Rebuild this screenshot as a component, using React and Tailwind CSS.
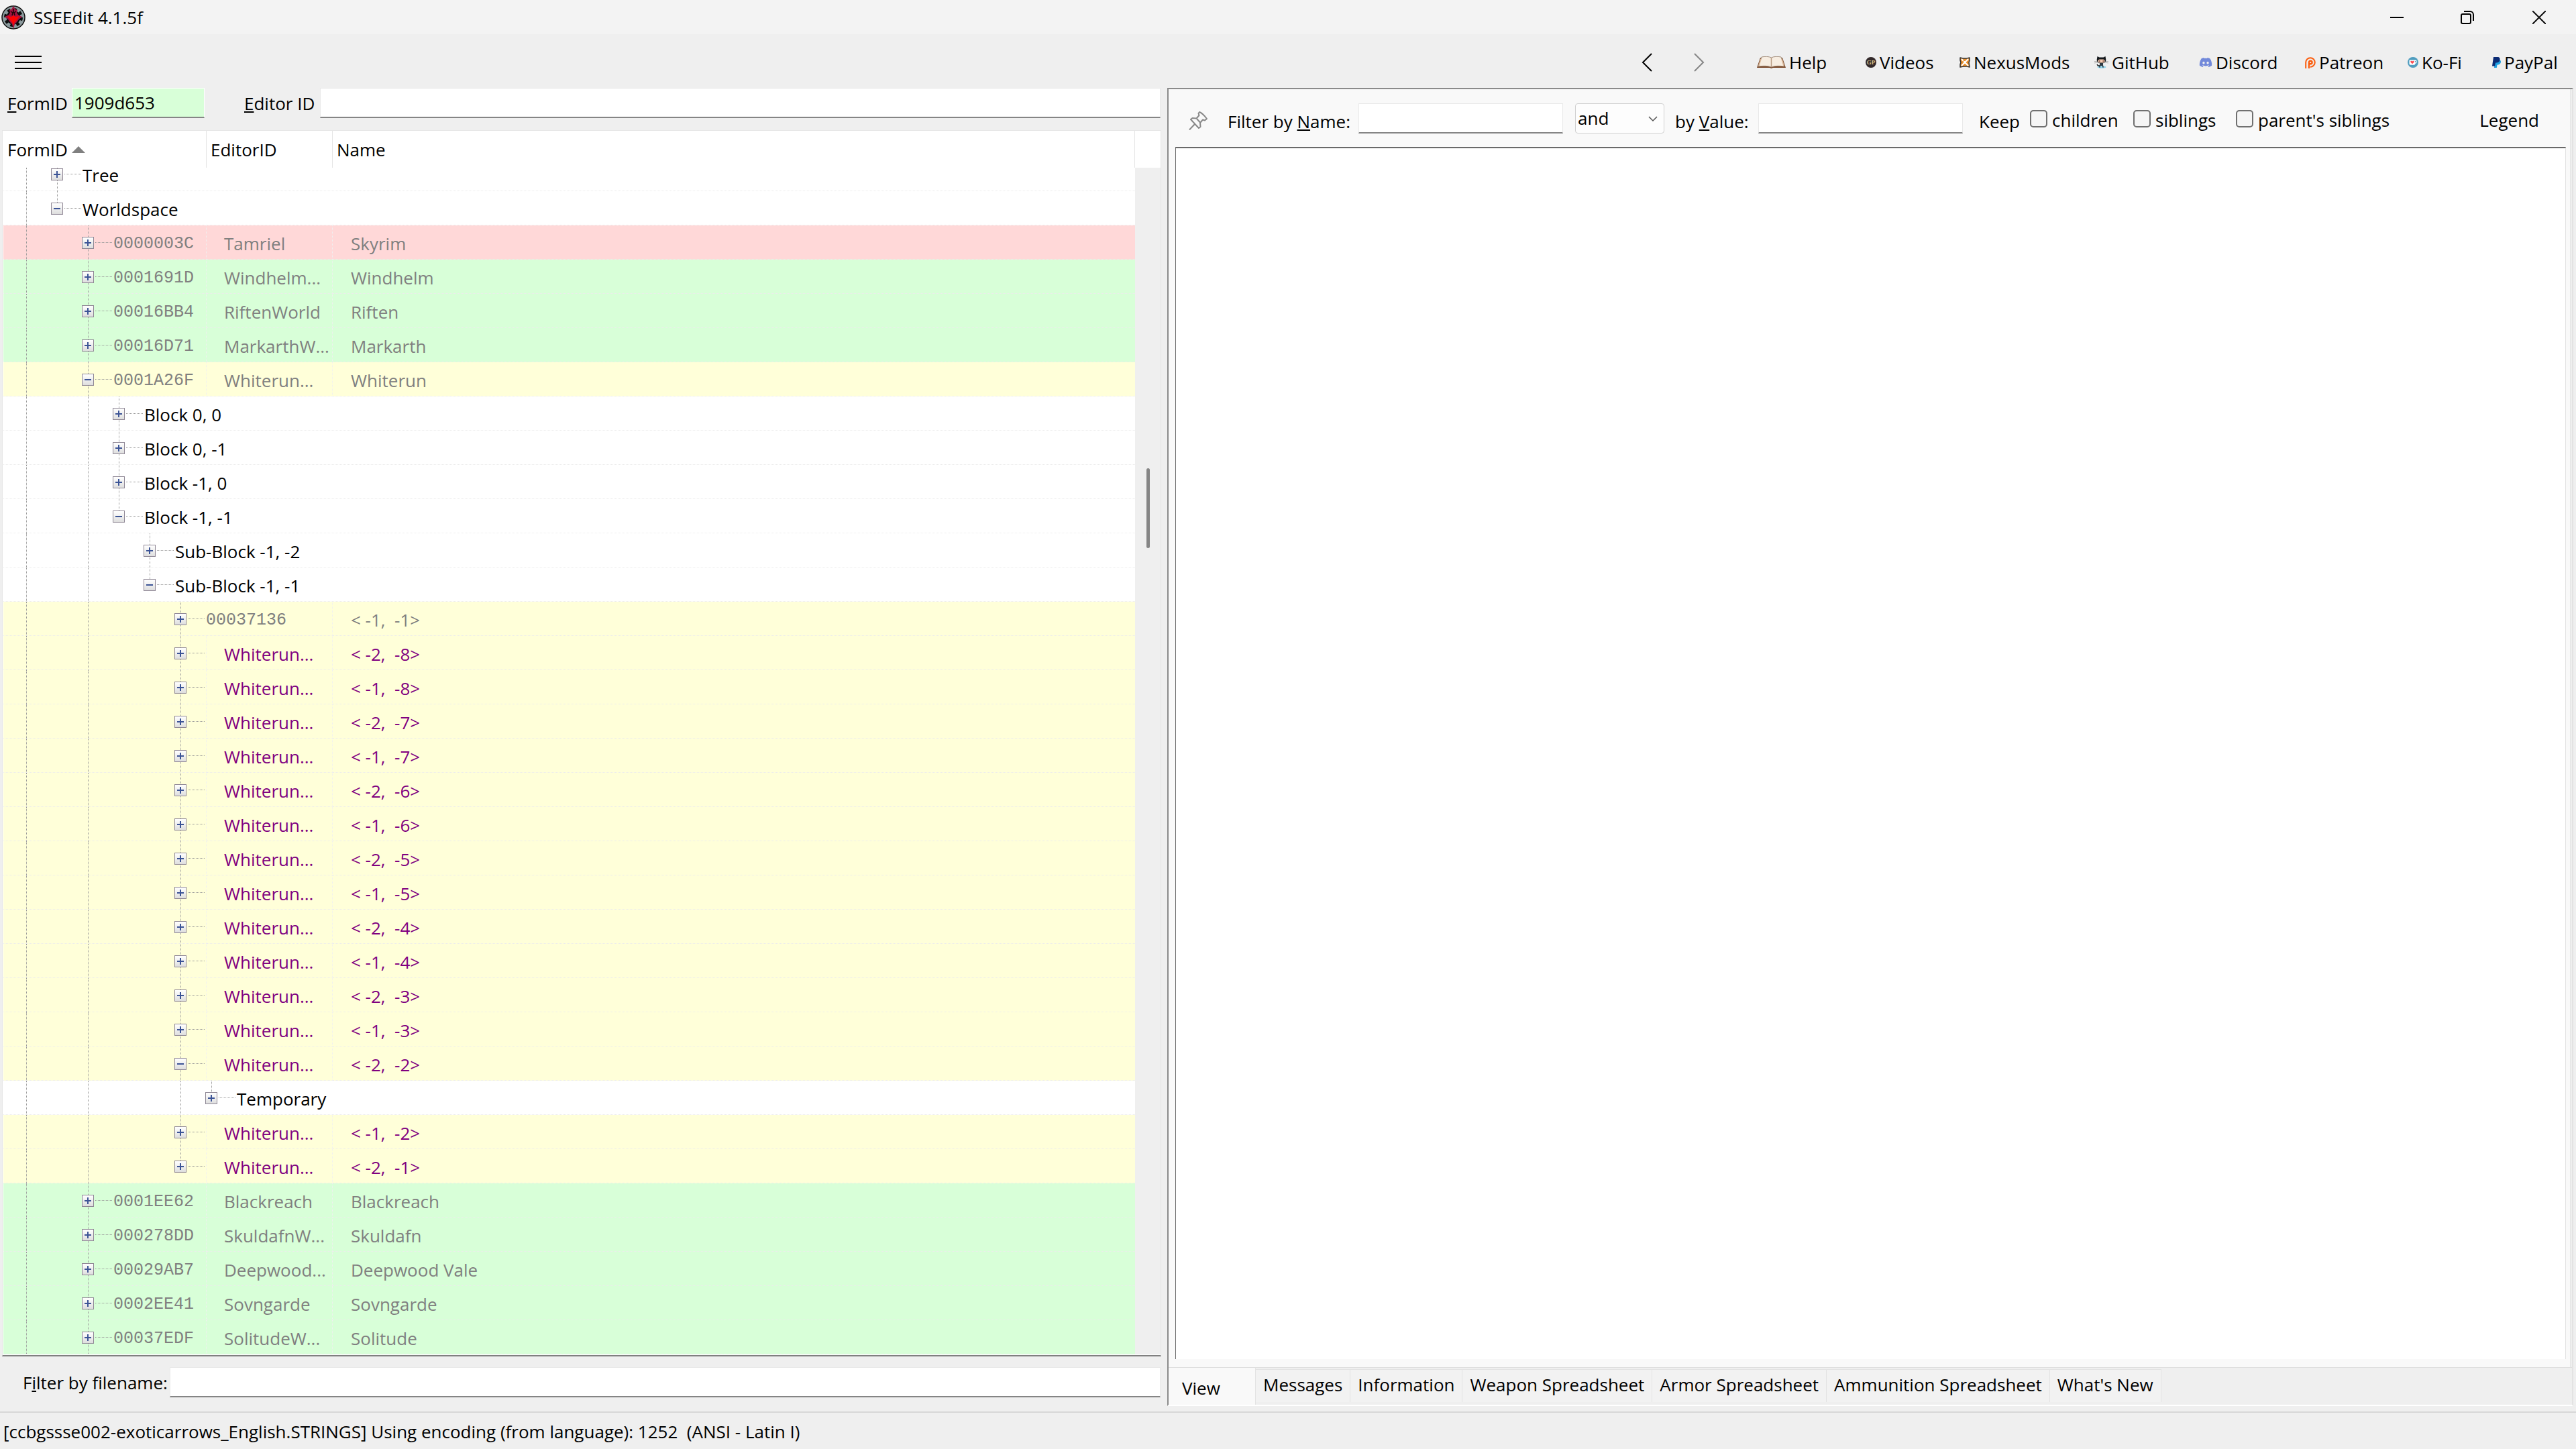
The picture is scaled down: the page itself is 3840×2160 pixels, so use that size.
import { useState } from 'react'
import { FaDiscord } from 'react-icons/fa'

// guides: one character per ancestor level, "|" keeps the line running, " " leaves it blank
const ROWS = [
  { guides: '|', open: false, label: 'Tree', span: 3, clipped: true },
  { guides: '|', open: true, label: 'Worldspace', span: 3, last: true },
  { guides: '| ', id: '0000003C', editor: 'Tamriel', name: 'Skyrim', tone: 'red' },
  { guides: '| ', id: '0001691D', editor: 'Windhelm...', name: 'Windhelm', tone: 'green' },
  { guides: '| ', id: '00016BB4', editor: 'RiftenWorld', name: 'Riften', tone: 'green' },
  { guides: '| ', id: '00016D71', editor: 'MarkarthW...', name: 'Markarth', tone: 'green' },
  { guides: '| ', id: '0001A26F', editor: 'Whiterun...', name: 'Whiterun', tone: 'yellow', open: true },
  { guides: '| |', label: 'Block 0, 0', span: 3 },
  { guides: '| |', label: 'Block 0, -1', span: 3 },
  { guides: '| |', label: 'Block -1, 0', span: 3 },
  { guides: '| |', label: 'Block -1, -1', span: 3, open: true, last: true },
  { guides: '| | ', label: 'Sub-Block -1, -2', span: 3 },
  { guides: '| | ', label: 'Sub-Block -1, -1', span: 3, open: true, last: true },
  { guides: '| |  ', id: '00037136', name: '< -1,  -1>', tone: 'yellow', span: 2 },
  ...[
    '< -2,  -8>', '< -1,  -8>', '< -2,  -7>', '< -1,  -7>', '< -2,  -6>', '< -1,  -6>',
    '< -2,  -5>', '< -1,  -5>', '< -2,  -4>', '< -1,  -4>', '< -2,  -3>', '< -1,  -3>',
  ].map((name) => ({ guides: '| |  ', editor: 'Whiterun...', name, tone: 'yellow', added: true })),
  { guides: '| |  ', editor: 'Whiterun...', name: '< -2,  -2>', tone: 'yellow', added: true, open: true },
  { guides: '| |  |', label: 'Temporary', span: 3, last: true },
  { guides: '| |  ', editor: 'Whiterun...', name: '< -1,  -2>', tone: 'yellow', added: true },
  { guides: '| |  ', editor: 'Whiterun...', name: '< -2,  -1>', tone: 'yellow', added: true, last: true },
  { guides: '| ', id: '0001EE62', editor: 'Blackreach', name: 'Blackreach', tone: 'green' },
  { guides: '| ', id: '000278DD', editor: 'SkuldafnW...', name: 'Skuldafn', tone: 'green' },
  { guides: '| ', id: '00029AB7', editor: 'Deepwood...', name: 'Deepwood Vale', tone: 'green' },
  { guides: '| ', id: '0002EE41', editor: 'Sovngarde', name: 'Sovngarde', tone: 'green' },
  { guides: '| ', id: '00037EDF', editor: 'SolitudeW...', name: 'Solitude', tone: 'green' },
]

const TONES = {
  red: 'bg-[#ffd8d8]',
  green: 'bg-[#d8ffd8]',
  yellow: 'bg-[#ffffd9]',
}

const TABS = ['Messages', 'Information', 'Weapon Spreadsheet', 'Armor Spreadsheet', 'Ammunition Spreadsheet', "What's New"]

function AppIcon() {
  return (
    <svg viewBox="0 0 36 36" className="size-9">
      <circle cx="18" cy="18" r="17" fill="#8b9a9d" stroke="#111" strokeWidth="1.5" />
      <circle cx="18" cy="18" r="10.5" fill="#0c0c0c" />
      <circle cx="18" cy="18" r="12" fill="none" stroke="#0c0c0c" strokeWidth="4" strokeDasharray="4.7 4.7" />
      <path d="M18 1l3 5 3 1-1 4 2 3 6 3-5 4-3 4-3 3-2 7-2-7-3-3-3-4-5-4 6-3 2-3-1-4 3-1z" fill="#a3123f" />
      <path d="M9 16l6 1 3-2 3 2 6-1-4 6-3 3-2 5-2-5-3-3z" fill="#fb0505" />
      <path d="M14 9l3 2-1 4M22 9l-3 2 1 4M18 5v6" stroke="#1c0509" strokeWidth="1.5" fill="none" />
    </svg>
  )
}

function BookIcon() {
  return (
    <svg viewBox="0 0 43 18" className="h-[18px] w-[43px]">
      <path d="M5 2L0 17h19l2.500 1 2.500-1h19L38 2z" fill="#7b4a2b" />
      <path d="M7 1C12 0 18 0 21.500 2C25 0 31 0 36 1l5 14c-7-1-15-1-19.500 1C17 14 9 14 2 15z" fill="#f7ede1" stroke="#a08a78" strokeWidth="1" />
      <path d="M21.500 2v14" stroke="#b89c84" strokeWidth="1.500" />
      <path d="M6 4L3 14M37 4l3 10" stroke="#dcb999" strokeWidth="1.500" />
    </svg>
  )
}

function VideosIcon() {
  return (
    <svg viewBox="0 0 16 16" className="size-4">
      <circle cx="8" cy="8" r="8" fill="#33292a" />
      <text x="8" y="11" textAnchor="middle" fontSize="9" fontWeight="700" fontFamily="Liberation Serif, serif" fill="#d9c48e">GP</text>
    </svg>
  )
}

function NexusIcon() {
  return (
    <svg viewBox="0 0 16 16" className="size-4">
      <path d="M1 1l4 1h6l4-1v4l-1 3 1 7-4-1H6l-5 1V11l1-3-1-3z" fill="#e98f2c" stroke="#333" strokeWidth="1.500" strokeLinejoin="round" />
      <path d="M3 3l10 10M13 3L3 13" stroke="#fff" strokeWidth="2" />
      <circle cx="8" cy="8" r="2" fill="#fff" />
      <path d="M5 8a3 3 0 0 1 3-3" stroke="#e98f2c" strokeWidth="1" fill="none" />
    </svg>
  )
}

function OctocatIcon() {
  return (
    <svg viewBox="0 0 21 18" className="h-[18px] w-[21px]">
      <ellipse cx="11" cy="16" rx="6.500" ry="1.800" fill="#8fd3ea" />
      <path d="M0 7.500h5M0 10l5-1M21 7.500h-5M21 10l-5-1" stroke="#999" strokeWidth=".7" />
      <path d="M4.500 0l3 1.500h6l3-1.500.8 5c0 4-3 5.500-6.800 5.500S3.700 9 3.700 5z" fill="#15191c" />
      <rect x="5.500" y="4.500" width="10" height="5" rx="2.500" fill="#f4cbb2" />
      <path d="M7.800 6v2M13.200 6v2" stroke="#7a4b3c" strokeWidth="1.300" />
      <path d="M8 10h5v3l1 3.500h-2V14h-3v2.500H7l1-3.500z" fill="#2d3a42" />
      <path d="M8 14H5.500L4 12" stroke="#15191c" strokeWidth="1.300" fill="none" />
    </svg>
  )
}

function PatreonIcon() {
  return (
    <svg viewBox="0 0 16 17" className="h-[17px] w-4" fill="none" stroke="#fb5c0c">
      <path d="M1.200 17V8A6.800 6.800 0 1 1 8 14.800" strokeWidth="2" />
      <path d="M6 17V8a2.300 2.300 0 1 1 2.300 2.300H7" strokeWidth="2.400" />
    </svg>
  )
}

function KofiIcon() {
  return (
    <svg viewBox="0 0 16 16" className="size-4">
      <circle cx="8" cy="8" r="8" fill="#4f9dbf" />
      <path d="M2.500 4.500h9c3 0 3 5 0 5.200-.5 1.500-1 2-2 2h-5c-1.500 0-2-1-2-2z" fill="#fff" />
      <circle cx="11.800" cy="7" r="1" fill="#4f9dbf" />
      <path d="M7 10.200L4.500 7.800c-1-1.500 1-2.800 2.500-1.300C8.500 5 10.500 6.300 9.500 7.800z" fill="#f9484f" />
    </svg>
  )
}

function PaypalIcon() {
  return (
    <svg viewBox="0 0 13 16" className="h-4 w-[13px]">
      <path d="M4 4h7c2 1 2.500 3 1.500 5-.9 2-2.500 2.700-5 2.700L6.800 16H3z" fill="#1f9fe0" />
      <path d="M2 0h6c3 0 4 2 3.500 4C11 7.500 9 8.500 5 8.500L4 13.500H0z" fill="#0b2b74" />
    </svg>
  )
}

function PinIcon() {
  return (
    <svg viewBox="0 0 28 28" className="size-7" fill="none" stroke="#888" strokeWidth="2" strokeLinejoin="round">
      <path d="M16 1c3 1 8 6 11 10l-3 2.500-3-1-4 4.500.5 6-2.500 2L3 12l2.500-2 6 .5L15.500 6l-1-3z" />
      <path d="M9 19l-8 8.500M12 11l5 5.500" />
    </svg>
  )
}

const LINKS = [
  { label: 'Help', icon: <BookIcon />, width: 'w-[162px]' },
  { label: 'Videos', icon: <VideosIcon />, width: 'w-[140px]' },
  { label: 'NexusMods', icon: <NexusIcon />, width: 'w-[201px]' },
  { label: 'GitHub', icon: <OctocatIcon />, width: 'w-[156px]' },
  { label: 'Discord', icon: <FaDiscord className="size-5 text-[#7289da]" />, width: 'w-[158px]' },
  { label: 'Patreon', icon: <PatreonIcon />, width: 'w-[153px]' },
  { label: 'Ko-Fi', icon: <KofiIcon />, width: 'w-[126px]' },
  { label: 'PayPal', icon: <PaypalIcon />, width: 'w-[125px]' },
]

function TitleBar() {
  return (
    <header className="flex h-[51px] items-center bg-[#f3f3f3] pl-0.5">
      <AppIcon />
      <h1 className="ml-3">SSEEdit 4.1.5f</h1>
      <div className="ml-auto flex">
        <button aria-label="Minimize" className="flex h-12 w-[105px] items-center justify-center">
          <svg viewBox="0 0 20 20" className="size-5" stroke="#000" strokeWidth="2"><path d="M0 10h20" /></svg>
        </button>
        <button aria-label="Restore" className="flex h-12 w-[105px] items-center justify-center">
          <svg viewBox="0 0 20 20" className="size-5" fill="none" stroke="#000" strokeWidth="2">
            <rect x="1" y="5" width="14" height="14" rx="2" />
            <path d="M5 1h9a5 5 0 0 1 5 5v9" />
          </svg>
        </button>
        <button aria-label="Close" className="flex h-12 w-[110px] items-center justify-center">
          <svg viewBox="0 0 20 20" className="size-5" stroke="#111" strokeWidth="2"><path d="M0 0l20 20M20 0L0 20" /></svg>
        </button>
      </div>
    </header>
  )
}

function Toolbar() {
  return (
    <nav className="flex h-20 items-center pl-[22px] pt-1">
      <button aria-label="Menu" className="flex flex-col gap-[7px]">
        <span className="h-0.5 w-10 bg-black" />
        <span className="h-0.5 w-10 bg-black" />
        <span className="h-0.5 w-10 bg-black" />
      </button>
      <button aria-label="Back" className="ml-auto mr-[62px]">
        <svg viewBox="0 0 16 28" className="h-7 w-4" fill="none" stroke="#000" strokeWidth="2"><path d="M15 1L2 14l13 13" /></svg>
      </button>
      <button aria-label="Forward" className="mr-[78px]">
        <svg viewBox="0 0 16 28" className="h-7 w-4" fill="none" stroke="#868686" strokeWidth="2"><path d="M1 1l13 13L1 27" /></svg>
      </button>
      {LINKS.map(({ label, icon, width }) => (
        <a key={label} href="#" className={`flex shrink-0 items-center gap-[5px] ${width}`}>
          {icon}
          {label}
        </a>
      ))}
    </nav>
  )
}

function Guide({ on }) {
  return (
    <span className="flex w-[46px] shrink-0 justify-center">
      {on && <span className="w-px border-l border-dotted border-[#999]" />}
    </span>
  )
}

function Node({ open, last, clipped, onToggle }) {
  return (
    <>
      <span className="flex w-[46px] shrink-0 flex-col items-center">
        <span className={`w-px border-l border-dotted border-[#999] ${clipped ? 'h-px' : 'h-[17px]'}`} />
        <button
          aria-label={open ? 'Collapse' : 'Expand'}
          onClick={onToggle}
          className="flex size-[18px] shrink-0 items-center justify-center border border-[#8f8795] bg-linear-to-b from-white to-[#dedede]"
        >
          <svg viewBox="0 0 10 10" className="size-2.5" stroke="#3c5496" strokeWidth="2">
            <path d={open ? 'M0 5h10' : 'M0 5h10M5 0v10'} />
          </svg>
        </button>
        {!last && <span className="w-px flex-1 border-l border-dotted border-[#999]" />}
      </span>
      <span className={`-ml-3 mr-0.5 h-px w-[25px] shrink-0 border-t border-dotted border-[#999] ${clipped ? 'mt-[9px]' : 'mt-[25px]'}`} />
    </>
  )
}

// level 1 and level 3 continue to the bottom of the view
function isLine(guides, i) {
  return i === 0 || i === 2 || guides[i] === '|'
}

function TreeRow({ row }) {
  const [open, setOpen] = useState(!!row.open)
  const text = row.added ? 'text-[#800080]' : row.label ? 'text-black' : 'text-[#808080]'
  const line = 'border-b border-dotted border-b-[#ececec]'
  const divider = 'border-r border-r-[#f0f0f0]'

  return (
    <tr className={`${TONES[row.tone] || 'bg-white'} ${text}`}>
      <td colSpan={row.span || 1} className={`p-0 ${line} ${row.span === 3 ? '' : divider}`}>
        <div className={`flex pl-[11px] ${row.clipped ? 'h-[34px]' : 'h-[50px]'}`}>
          {row.guides.split('').map((g, i) => <Guide key={i} on={isLine(row.guides, i)} />)}
          <Node open={open} last={row.last} clipped={row.clipped} onToggle={() => setOpen(!open)} />
          {row.id && <span className="font-['Liberation_Mono',monospace] text-[25px] leading-[56px]">{row.id}</span>}
          {row.label && <span className={row.clipped ? 'leading-[22px]' : 'leading-[54px]'}>{row.label}</span>}
        </div>
      </td>
      {!row.span && <td className={`p-0 pl-[26px] ${line} ${divider}`}><div className="h-[50px] leading-[54px]">{row.editor}</div></td>}
      {row.span !== 3 && <td className={`p-0 pl-[27px] ${line}`}><div className="h-[50px] leading-[54px]">{row.name}</div></td>}
    </tr>
  )
}

function RecordTree() {
  return (
    <div className="ml-[3px] mr-[9px] mt-[18px] flex border border-b-2 border-[#e6e6e6] border-b-[#808080] bg-white pb-px pl-px">
      <table className="flex-1 table-fixed border-separate border-spacing-0 self-start whitespace-pre text-left">
        <colgroup>
          <col className="w-[302px]" />
          <col className="w-[188px]" />
          <col />
        </colgroup>
        <thead>
          <tr className="h-[55px]">
            <th className="border-r border-[#e5e5e5] p-0 pl-1.5 font-normal">
              <span className="flex items-center gap-1.5">
                FormID
                <svg viewBox="0 0 20 10" className="h-2.5 w-5"><path d="M0 10L10 0l10 10z" fill="#808080" /></svg>
              </span>
            </th>
            <th className="border-r border-[#e5e5e5] p-0 pl-1.5 font-normal">EditorID</th>
            <th className="border-r border-[#e5e5e5] p-0 pl-1.5 font-normal">Name</th>
          </tr>
        </thead>
        <tbody>
          {ROWS.map((row, i) => <TreeRow key={i} row={row} />)}
        </tbody>
      </table>
      <div className="mt-[55px] flex w-[38px] flex-col items-center bg-[#efefef]">
        <div className="mt-[448px] h-[119px] w-[5px] rounded-full bg-[#858585]" />
      </div>
    </div>
  )
}

const INPUT = 'h-[45px] min-w-0 border border-b-2 border-[#e9e9e9] border-b-[#858585] bg-white px-[3px] outline-none'

function LeftPane() {
  return (
    <section className="flex flex-col">
      <div className="flex items-center pl-[11px] pr-2.5">
        <label htmlFor="formid" className="mt-px w-24"><u className="underline-offset-2">F</u>ormID</label>
        <input id="formid" defaultValue="1909d653" className="h-[45px] w-[198px] border border-b-2 border-white border-b-[#858585] bg-[#d8ffd8] px-[3px] outline-none" />
        <label htmlFor="editorid" className="ml-[59px] mt-px w-[113px]"><u className="underline-offset-2">E</u>ditor ID</label>
        <input id="editorid" className={`${INPUT} flex-1`} />
      </div>
      <RecordTree />
      <div className="mt-4 flex items-center pl-[34px] pr-2.5">
        <label htmlFor="filename" className="mt-px w-[219px]">F<u className="underline-offset-2">i</u>lter by filename:</label>
        <input id="filename" className={`${INPUT} flex-1`} />
      </div>
    </section>
  )
}

function Check({ id, label, width }) {
  return (
    <span className={`flex items-center gap-[7px] ${width}`}>
      <input id={id} type="checkbox" className="mb-1 size-[26px] shrink-0 appearance-none rounded-[5px] border-2 border-[#707070] bg-[#f5f5f5] checked:bg-[#0067c0]" />
      <label htmlFor={id}>{label}</label>
    </span>
  )
}

function FilterBar() {
  return (
    <div className="flex h-[86px] items-center pl-[30px] pr-[46px]">
      <button aria-label="Pin" className="mr-[30px] mt-2"><PinIcon /></button>
      <label htmlFor="by-name" className="mt-2.5 w-[195px]">Filter by <u className="underline-offset-2">N</u>ame:</label>
      <input id="by-name" className={`${INPUT} w-[305px]`} />
      <div className="relative ml-[18px] w-[133px]">
        <select aria-label="Operator" defaultValue="and" className="h-[45px] w-full appearance-none rounded-sm border border-[#d0d0d0] bg-[#fdfdfd] pl-[3px]">
          <option>and</option>
          <option>or</option>
        </select>
        <svg viewBox="0 0 14 8" className="pointer-events-none absolute right-2.5 top-[19px] h-2 w-3.5" fill="none" stroke="#555" strokeWidth="1.500"><path d="M1 1l6 6 6-6" /></svg>
      </div>
      <label htmlFor="by-value" className="ml-4 mt-2.5 w-[124px]">by <u className="underline-offset-2">V</u>alue:</label>
      <input id="by-value" className={`${INPUT} w-[305px]`} />
      <span className="ml-6 mt-2.5 w-[76px]">Keep</span>
      <div className="mt-1.5 flex">
        <Check id="children" label="children" width="w-[154px]" />
        <Check id="siblings" label="siblings" width="w-[153px]" />
        <Check id="parents" label="parent's siblings" width="w-[240px]" />
      </div>
      <button className="ml-auto mt-1.5">Legend</button>
    </div>
  )
}

function RightPane() {
  return (
    <section className="mr-1 flex flex-col border-2 border-b-2 border-[#8a8a8a] border-b-white border-r-[#e3e3e3]">
      <div className="mr-0.5 flex flex-1 flex-col border-r border-[#e5e5e5] bg-[#f9f9f9]">
        <FilterBar />
        <div className="mb-3 ml-2.5 mr-1.5 flex-1 border-l border-r border-t-2 border-[#696969] border-r-[#e3e3e3] bg-white" />
      </div>
      <div className="flex items-start border-t border-[#dfdfdf]">
        <button className="h-[55px] w-[130px] border-r border-[#e3e3e3] bg-[#f9f9f9] pl-5 pt-1 text-left">View</button>
        {TABS.map((tab) => (
          <button key={tab} className="mt-0.5 h-[49px] border-r border-t border-[#e3e3e3] bg-[#f2f2f2] px-[11px] pb-1">{tab}</button>
        ))}
      </div>
    </section>
  )
}

export default function App() {
  return (
    <div className="flex min-h-screen flex-col bg-[#efefef] font-['Open_Sans',sans-serif] text-[26px] leading-9 text-black">
      <TitleBar />
      <Toolbar />
      <main className="grid flex-1 grid-cols-[29fr_35fr]">
        <LeftPane />
        <RightPane />
      </main>
      <footer className="mt-2 h-14 whitespace-pre border-t-2 border-[#d7d7d7] pl-[5px] pt-2.5">
        [ccbgssse002-exoticarrows_English.STRINGS] Using encoding (from language): 1252  (ANSI - Latin I)
      </footer>
    </div>
  )
}
